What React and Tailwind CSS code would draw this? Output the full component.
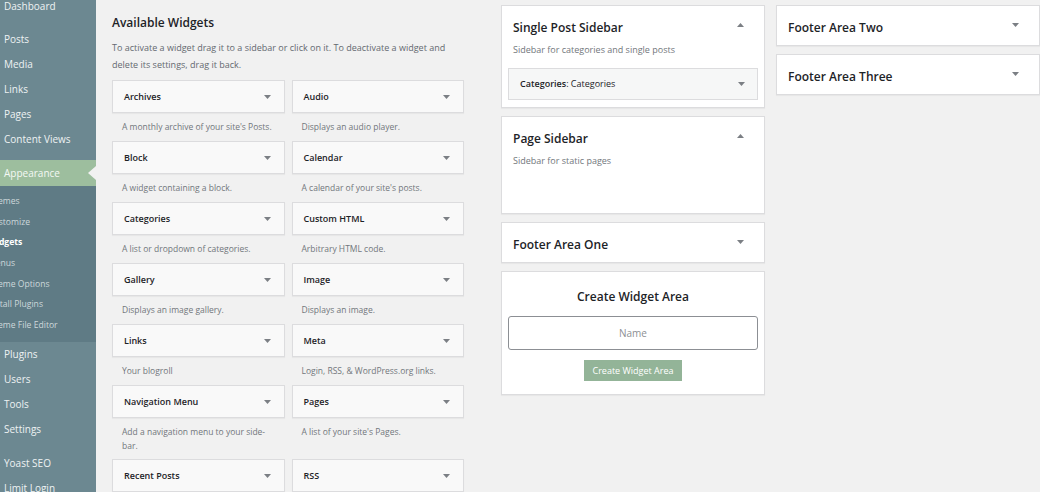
import React from "react";

const F = { fontFamily: '"Open Sans", "Noto Sans", sans-serif' };

const Down = () => (
  <svg width="7" height="4" viewBox="0 0 7 4" className="shrink-0">
    <path d="M0 0h7L3.5 4z" fill="#7b7f84" />
  </svg>
);
const Up = () => (
  <svg width="7" height="4" viewBox="0 0 7 4" className="shrink-0">
    <path d="M0 4h7L3.5 0z" fill="#7b7f84" />
  </svg>
);

const widgets = [
  ["Archives", "A monthly archive of your site's Posts."],
  ["Audio", "Displays an audio player."],
  ["Block", "A widget containing a block."],
  ["Calendar", "A calendar of your site's posts."],
  ["Categories", "A list or dropdown of categories."],
  ["Custom HTML", "Arbitrary HTML code."],
  ["Gallery", "Displays an image gallery."],
  ["Image", "Displays an image."],
  ["Links", "Your blogroll"],
  ["Meta", "Login, RSS, & WordPress.org links."],
  ["Navigation Menu", "Add a navigation menu to your side-\nbar."],
  ["Pages", "A list of your site's Pages."],
  ["Recent Posts", ""],
  ["RSS", ""],
];

const mainTop = ["Posts", "Media", "Links", "Pages", "Content Views"];
const sub = ["Themes", "Customize", "Widgets", "Menus", "Theme Options", "Install Plugins", "Theme File Editor"];
const mainBottom = ["Plugins", "Users", "Tools", "Settings"];

function Item({ label }) {
  return (
    <div className="h-[25px] leading-[25px] pl-[4px] text-[10px] text-[#eef2f3] whitespace-nowrap">{label}</div>
  );
}

function Sidebar() {
  return (
    <div className="w-[96px] shrink-0 bg-[#6c8891] overflow-hidden h-[492px] relative">
      <div className="-mt-[6px]">
        <Item label="Dashboard" />
        <div className="h-[8px]" />
        {mainTop.map((l) => (
          <Item key={l} label={l} />
        ))}
        <div className="h-[8px]" />
        <div className="h-[26px] leading-[26px] bg-[#9dbe9e] pl-[4px] text-[10px] text-[#f4f8f4] whitespace-nowrap relative">
          Appearance
        </div>
        <div className="bg-[#5f7b85] pt-[5px] pb-[6px]">
          {sub.map((l) => (
            <div
              key={l}
              className={
                "h-[20.7px] leading-[20.7px] text-[8.6px] whitespace-nowrap -ml-[12px] " +
                (l === "Widgets" ? "text-white font-bold" : "text-[#cdd8db]")
              }
            >
              {l}
            </div>
          ))}
        </div>
        {mainBottom.map((l) => (
          <Item key={l} label={l} />
        ))}
        <div className="h-[9px]" />
        <Item label="Yoast SEO" />
        <Item label="Limit Login" />
      </div>
      <div className="absolute right-0 top-[166px] w-0 h-0 border-y-[7px] border-y-transparent border-r-[8px] border-r-[#f1f1f1]" />
    </div>
  );
}

function Widget({ title, desc }) {
  return (
    <div className="flex flex-col">
      <div className="h-[33px] flex items-center justify-between pl-[11px] pr-[13px] bg-[#f9f9f9] border border-[#dcdcde] shadow-[0_1px_1px_rgba(0,0,0,0.04)]">
        <span className="text-[9px] font-semibold text-[#1d2327]">{title}</span>
        <Down />
      </div>
      <div className="pt-[7px] pb-[6px] pl-[10px] pr-[4px] text-[8.5px] leading-[14px] text-[#72777c] min-h-[28px] whitespace-pre-line">
        {desc}
      </div>
    </div>
  );
}

function Panel({ title, desc, open, children, minH }) {
  return (
    <div className={"bg-white border border-[#dcdcde] shadow-[0_1px_1px_rgba(0,0,0,0.04)] " + (minH || "")}>
      <div className="flex items-start justify-between pl-[11px] pr-[20px] pt-[14px]">
        <span className="text-[12px] leading-[16px] font-semibold text-[#1d2327]">{title}</span>
        <div className="mt-[3px]">{open ? <Up /> : <Down />}</div>
      </div>
      {desc && (
        <div className="pl-[11px] mt-[6px] text-[9px] leading-[16px] text-[#72777c]">{desc}</div>
      )}
      {children}
      {!desc && <div className="h-[9px]" />}
    </div>
  );
}

export default function App() {
  return (
    <div style={F} className="w-[1040px] h-[492px] flex bg-[#f1f1f1] overflow-hidden">
      <Sidebar />
      <div className="flex pl-[16px]">
        <div className="w-[352px] shrink-0 pt-[14px]">
          <h2 className="text-[12px] leading-[18px] font-semibold text-[#1d2327]">Available Widgets</h2>
          <p className="mt-[7px] text-[9px] leading-[17px] text-[#646970]">
            To activate a widget drag it to a sidebar or click on it. To deactivate a widget and delete its settings, drag it back.
          </p>
          <div className="mt-[7px] grid grid-cols-2 gap-x-[7px]">
            {widgets.map(([t, d]) => (
              <Widget key={t} title={t} desc={d} />
            ))}
          </div>
        </div>
        <div className="w-[264px] shrink-0 ml-[37px] pt-[5px] flex flex-col gap-[8px]">
          <Panel title="Single Post Sidebar" desc="Sidebar for categories and single posts" open>
            <div className="mx-[6px] mt-[10px] mb-[7px] h-[32px] flex items-center justify-between pl-[11px] pr-[12px] bg-[#f6f7f7] border border-[#dcdcde]">
              <span className="text-[9px] text-[#1d2327]">
                <span className="font-semibold">Categories</span>: Categories
              </span>
              <Down />
            </div>
          </Panel>
          <Panel title="Page Sidebar" desc="Sidebar for static pages" open minH="h-[98px]" />
          <Panel title="Footer Area One" />
          <div className="bg-white border border-[#dcdcde] shadow-[0_1px_1px_rgba(0,0,0,0.04)] pt-[17px] pb-[13px] px-[6px] flex flex-col items-center">
            <div className="text-[12px] leading-[16px] font-semibold text-[#1d2327]">Create Widget Area</div>
            <div className="mt-[11px] w-full h-[34px] border border-[#8c8f94] rounded-[3px] flex items-center justify-center text-[10px] text-[#8c8f94]">
              Name
            </div>
            <div className="mt-[10px] h-[21px] w-[98px] bg-[#93b498] flex items-center justify-center text-[9px] text-white">
              Create Widget Area
            </div>
          </div>
        </div>
        <div className="w-[264px] shrink-0 ml-[11px] pt-[5px] flex flex-col gap-[8px]">
          <Panel title="Footer Area Two" />
          <Panel title="Footer Area Three" />
        </div>
      </div>
    </div>
  );
}
